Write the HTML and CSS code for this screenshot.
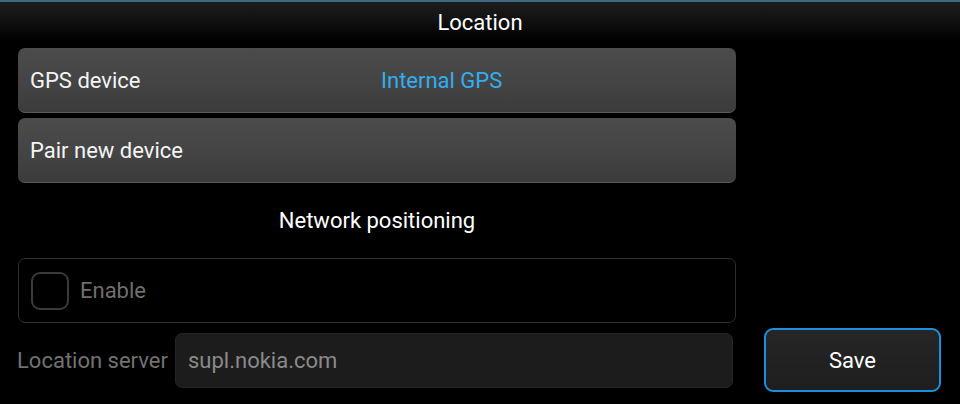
FILE: index.html
```html
<!DOCTYPE html>
<html>
<head>
<meta charset="utf-8">
<link rel="stylesheet" href="styles.css">
</head>
<body>
<div class="screen">
  <header class="titlebar"><span class="title">Location</span></header>
  <main class="content">
    <div class="list">
      <div class="row">
        <span class="row-label">GPS device</span>
        <span class="row-value">Internal GPS</span>
      </div>
      <div class="row">
        <span class="row-label">Pair new device</span>
      </div>
    </div>
    <h2 class="section">Network positioning</h2>
    <div class="toggle">
      <span class="checkbox"></span>
      <span class="toggle-label">Enable</span>
    </div>
    <div class="server-row">
      <span class="server-label">Location server</span>
      <div class="input">supl.nokia.com</div>
      <button class="save">Save</button>
    </div>
  </main>
</div>
</body>
</html>
```

FILE: styles.css
```css
html, body {
  margin: 0;
  padding: 0;
  background: #000;
}
body {
  font-family: Roboto, "Open Sans", "DejaVu Sans", sans-serif;
  color: #f2f2f2;
  width: 960px;
  height: 404px;
  overflow: hidden;
}
.titlebar {
  height: 40px;
  border-top: 2px solid #3d6a86;
  box-sizing: border-box;
  background: linear-gradient(to bottom, #1d1d1d 0%, #121212 45%, #000 100%);
  display: flex;
  align-items: center;
  justify-content: center;
}
.title {
  font-size: 22px;
  color: #fff;
  margin-top: 2px;
}
.content {
  padding-top: 8px;
}
.list {
  margin-left: 18px;
  width: 718px;
  display: flex;
  flex-direction: column;
  gap: 5px;
}
.row {
  height: 65px;
  box-sizing: border-box;
  border-radius: 7px;
  background: linear-gradient(to bottom, #4c4b4b 0%, #454545 50%, #3b3b3b 100%);
  border-bottom: 1px solid #5a5a5a;
  display: grid;
  grid-template-columns: 351px 1fr;
  align-items: center;
  padding-left: 12px;
  font-size: 22px;
}
.row-label {
  color: #f4f4f4;
}
.row-value {
  color: #33adf0;
}
.section {
  margin: 0 0 0 18px;
  width: 718px;
  height: 75px;
  text-align: center;
  font-weight: normal;
  font-size: 22px;
  color: #fff;
  line-height: 75px;
}
.toggle {
  margin-left: 18px;
  width: 718px;
  height: 65px;
  box-sizing: border-box;
  border: 1px solid #2e2e2e;
  border-radius: 7px;
  display: flex;
  align-items: center;
  padding-left: 12px;
  gap: 11px;
}
.checkbox {
  width: 38px;
  height: 38px;
  box-sizing: border-box;
  border: 2px solid #3a3a3a;
  border-radius: 9px;
}
.toggle-label {
  font-size: 22px;
  color: #6f6f6f;
}
.server-row {
  margin-top: 5px;
  display: flex;
  align-items: center;
  padding-left: 17px;
  height: 64px;
}
.server-label {
  font-size: 22px;
  color: #727272;
  width: 158px;
}
.input {
  width: 558px;
  height: 55px;
  box-sizing: border-box;
  background: #1c1c1c;
  border-radius: 7px;
  border: 1px solid #252525;
  display: flex;
  align-items: center;
  padding-left: 12px;
  font-size: 22px;
  color: #8a8a8a;
}
.save {
  margin-left: 31px;
  width: 177px;
  height: 64px;
  box-sizing: border-box;
  border: 2px solid #1b8fe0;
  border-radius: 9px;
  background: linear-gradient(to bottom, #262626, #1e1e1e);
  color: #fff;
  font-family: inherit;
  font-size: 22px;
  padding: 0;
}
```
